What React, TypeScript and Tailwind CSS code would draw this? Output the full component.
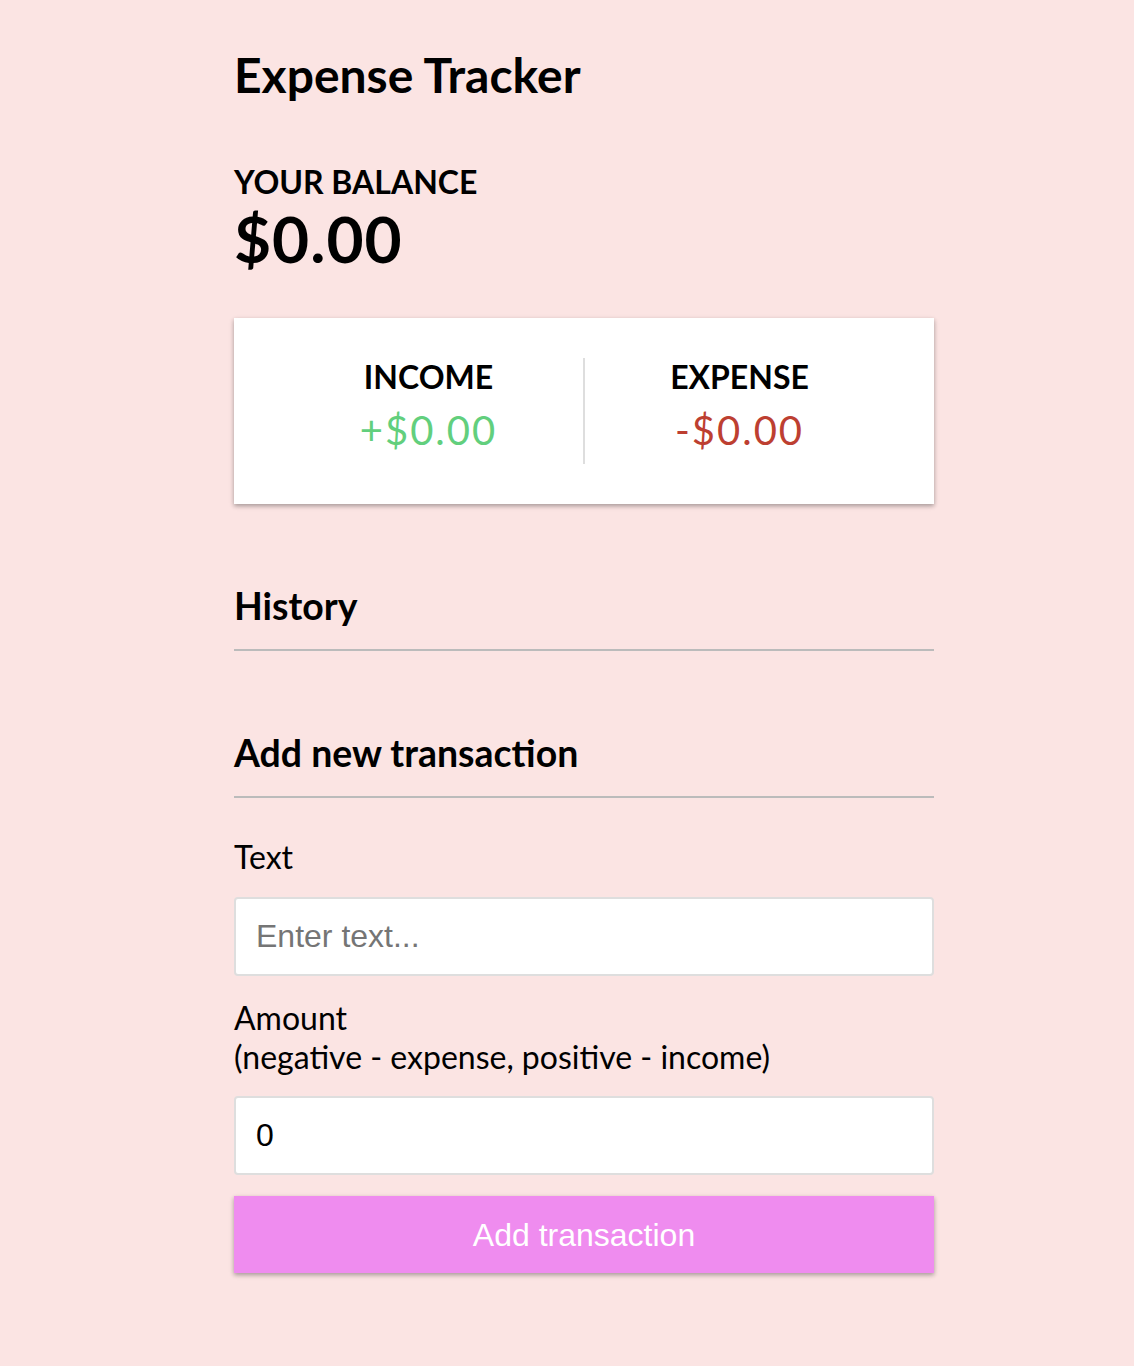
import { useState } from "react"

export default function App() {
  const [text, setText] = useState("")
  const [amount, setAmount] = useState("0")

  return (
    <main className="min-h-screen bg-[#fbe4e3] font-['Lato','Noto_Sans',sans-serif] text-black">
      <div className="w-[700px] ml-[234px] pt-[46px] pb-[60px]">
        <h2 className="text-[48px] font-bold leading-[1.2]">Expense Tracker</h2>

        {/* Balance */}
        <h4 className="mt-[59px] text-[32px] font-bold leading-[1.2] uppercase">Your Balance</h4>
        <h1 className="text-[64px] font-bold leading-[1.2] tracking-[1px]">$0.00</h1>

        {/* Income / expense card */}
        <div className="mt-[40px] flex bg-white p-10 shadow-[0_2px_6px_rgba(0,0,0,0.12),0_2px_4px_rgba(0,0,0,0.24)]">
          <div className="flex-1 text-center border-r-2 border-[#dedede]">
            <h4 className="text-[32px] font-bold leading-[1.2] uppercase">Income</h4>
            <p className="my-[10px] text-[40px] leading-[1.2] tracking-[2px] text-[#62cf7d]">+$0.00</p>
          </div>
          <div className="flex-1 text-center">
            <h4 className="text-[32px] font-bold leading-[1.2] uppercase">Expense</h4>
            <p className="my-[10px] text-[40px] leading-[1.2] tracking-[2px] text-[#bd3f31]">-$0.00</p>
          </div>
        </div>

        <h3 className="mt-[80px] pb-5 border-b-2 border-[#bbb] text-[37.44px] font-bold leading-[1.2]">History</h3>
        <ul className="list-none p-0"></ul>

        <h3 className="mt-[80px] pb-5 border-b-2 border-[#bbb] text-[37.44px] font-bold leading-[1.2]">Add new transaction</h3>

        <form onSubmit={(e) => e.preventDefault()}>
          <div>
            <label htmlFor="text" className="block mt-[40px] text-[32px] leading-[1.2]">Text</label>
            <input
              id="text"
              type="text"
              value={text}
              onChange={(e) => setText(e.target.value)}
              placeholder="Enter text..."
              className="block w-full h-[79px] mt-[21px] px-5 bg-white border-2 border-[#dedede] rounded-[4px] text-[32px] font-['Liberation_Sans',Arial,sans-serif] placeholder:text-[#757575] outline-none"
            />
          </div>
          <div>
            <label htmlFor="amount" className="block mt-[23px] text-[32px] leading-[1.2]">
              Amount <br />
              (negative - expense, positive - income)
            </label>
            <input
              id="amount"
              type="number"
              value={amount}
              onChange={(e) => setAmount(e.target.value)}
              placeholder="Enter amount..."
              className="block w-full h-[79px] mt-[20px] px-5 bg-white border-2 border-[#dedede] rounded-[4px] text-[32px] font-['Liberation_Sans',Arial,sans-serif] outline-none"
            />
          </div>
          <button className="block w-full h-[77px] mt-[21px] bg-[#ef8cef] text-white text-[32px] font-['Liberation_Sans',Arial,sans-serif] shadow-[0_2px_6px_rgba(0,0,0,0.12),0_2px_4px_rgba(0,0,0,0.24)] cursor-pointer">
            Add transaction
          </button>
        </form>
      </div>
    </main>
  )
}
